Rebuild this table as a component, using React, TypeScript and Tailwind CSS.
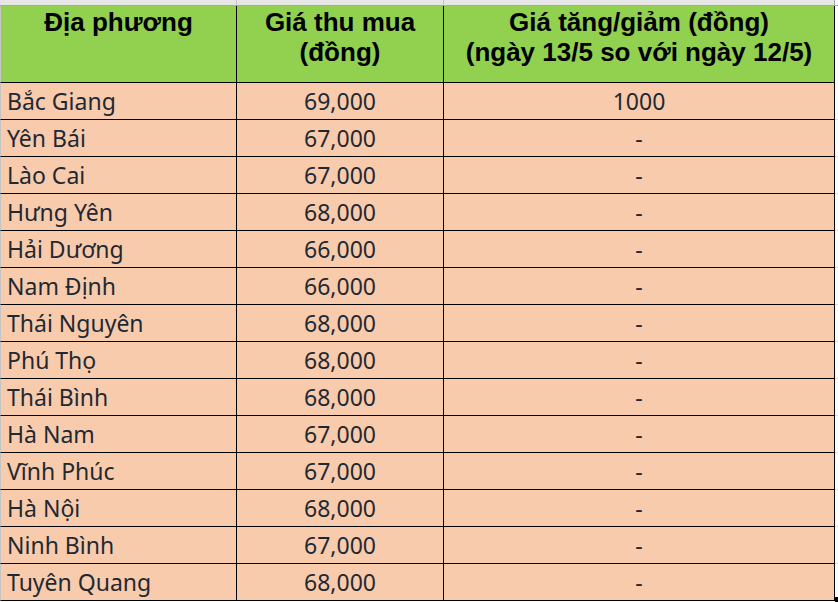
import React from 'react';

type Row = { place: string; price: string; change: string };

const rows: Row[] = [
  { place: 'Bắc Giang', price: '69,000', change: '1000' },
  { place: 'Yên Bái', price: '67,000', change: '-' },
  { place: 'Lào Cai', price: '67,000', change: '-' },
  { place: 'Hưng Yên', price: '68,000', change: '-' },
  { place: 'Hải Dương', price: '66,000', change: '-' },
  { place: 'Nam Định', price: '66,000', change: '-' },
  { place: 'Thái Nguyên', price: '68,000', change: '-' },
  { place: 'Phú Thọ', price: '68,000', change: '-' },
  { place: 'Thái Bình', price: '68,000', change: '-' },
  { place: 'Hà Nam', price: '67,000', change: '-' },
  { place: 'Vĩnh Phúc', price: '67,000', change: '-' },
  { place: 'Hà Nội', price: '68,000', change: '-' },
  { place: 'Ninh Bình', price: '67,000', change: '-' },
  { place: 'Tuyên Quang', price: '68,000', change: '-' },
];

export default function App() {
  return (
    <div className="relative w-[838px] h-[602px] overflow-hidden bg-white">
      {/* column header strip of the sheet */}
      <div className="flex h-[6px] border-b border-[#a8a8a8]">
        <div className="w-[237px] bg-[#e6e6e6] border-r border-[#c4c4c4]" />
        <div className="w-[207px] bg-[#e6e6e6] border-r border-[#c4c4c4]" />
        <div className="w-[391px] bg-[#e6e6e6] border-r border-[#a8a8a8]" />
        <div className="flex-1 bg-white" />
      </div>

      {/* header */}
      <div className="flex h-[77px] font-['Liberation_Sans',Arial,sans-serif] font-bold text-[26px] leading-[30px] text-black">
        <div className="w-[237px] bg-[#92d050] border-l border-l-[#c4c4c4] border-r border-r-black border-b border-b-black pt-[1px] text-center whitespace-nowrap">
          Địa phương
        </div>
        <div className="w-[207px] bg-[#92d050] border-r border-b border-black pt-[1px] text-center whitespace-nowrap">
          Giá thu mua
          <br />
          (đồng)
        </div>
        <div className="w-[391px] bg-[#92d050] border-r border-b border-black pt-[1px] text-center whitespace-nowrap">
          Giá tăng/giảm (đồng)
          <br />
          (ngày 13/5 so với ngày 12/5)
        </div>
      </div>

      {/* body */}
      {rows.map((r) => (
        <div
          key={r.place}
          className="flex h-[37px] font-['Noto_Sans',sans-serif] text-[23px] leading-[36px] text-[#1f2933]"
        >
          <div className="w-[237px] bg-[#f8cbad] border-l border-l-[#c4c4c4] border-r border-r-black border-b border-b-black pl-[6px] whitespace-nowrap">
            {r.place}
          </div>
          <div className="w-[207px] bg-[#f8cbad] border-r border-b border-black text-center">
            {r.price}
          </div>
          <div className="w-[391px] bg-[#f8cbad] border-r border-b border-black text-center">
            {r.change}
          </div>
          <div className="flex-1 border-b border-[#dadada]" />
        </div>
      ))}

      {/* fill handle */}
      <div className="absolute right-0 bottom-0 w-[3px] h-[5px] bg-black" />
    </div>
  );
}
